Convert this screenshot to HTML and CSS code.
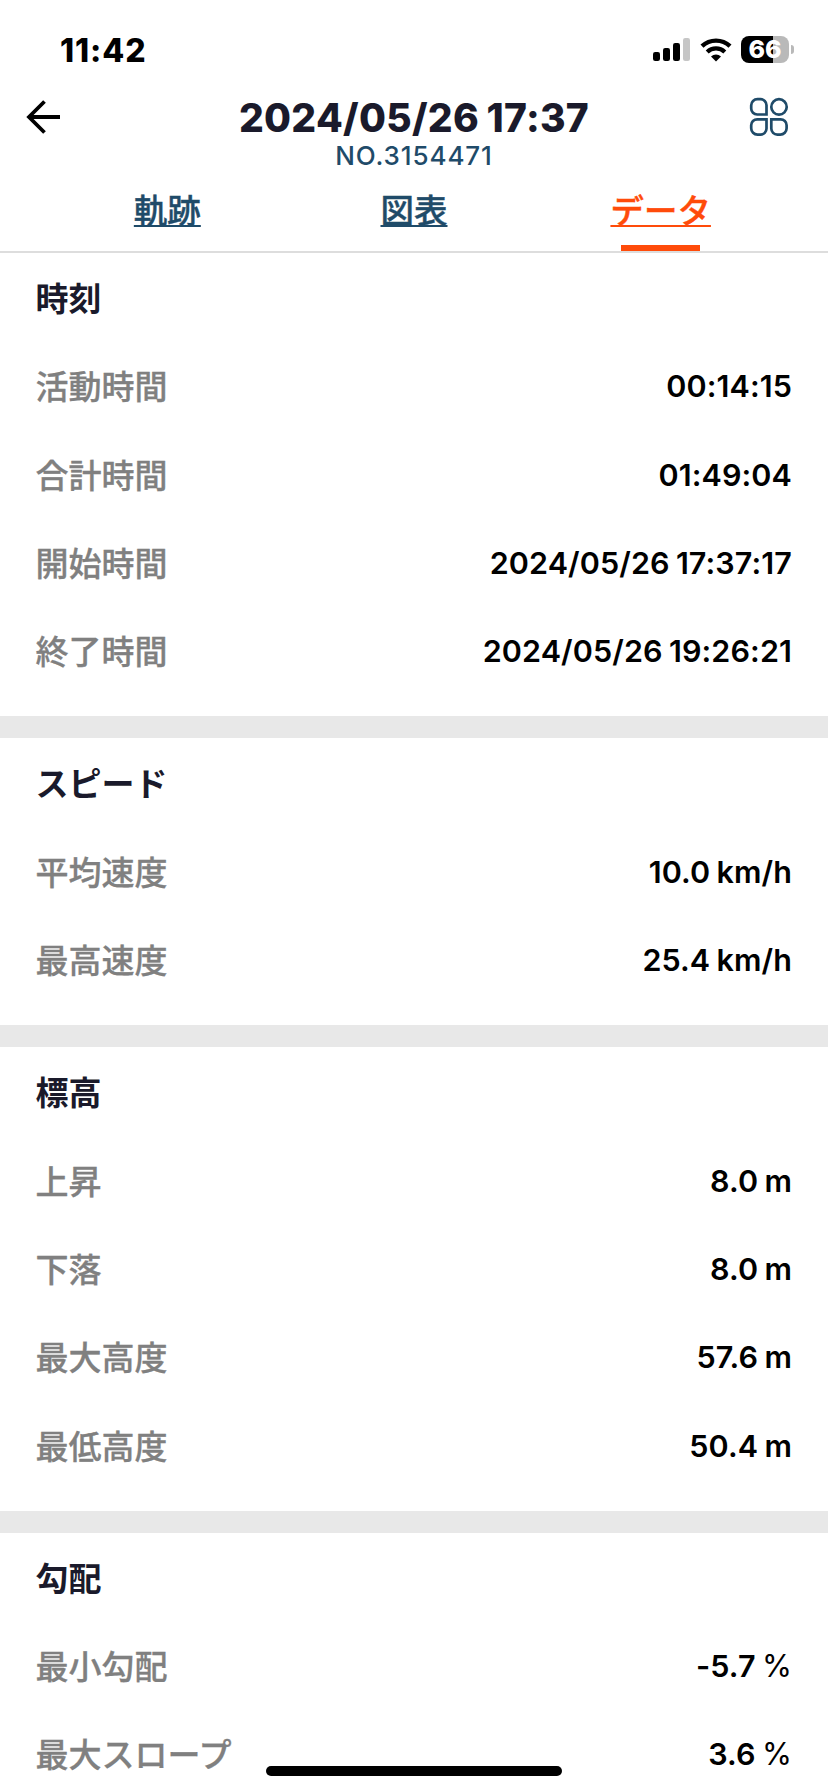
FILE: index.html
```html
<!DOCTYPE html>
<html lang="ja">
<head>
  <meta charset="UTF-8">
  <meta name="viewport" content="width=device-width, initial-scale=1.0">
  <title>データ</title>
  <link rel="stylesheet" href="styles.css">
</head>
<body>
  <div class="status-bar">
    <span class="clock">11:42</span>
    <div class="status-icons">
      <svg class="signal" width="38" height="24" viewBox="0 0 38 24">
        <rect x="0" y="14" width="7" height="9" rx="2.2"/>
        <rect x="10" y="10" width="7" height="13" rx="2.2"/>
        <rect x="20" y="5" width="7" height="18" rx="2.2"/>
        <rect x="30" y="0" width="7" height="23" rx="2.2" fill="#c6c6c6"/>
      </svg>
      <svg class="wifi" width="32" height="24" viewBox="0 0 32 24">
        <path d="M2 8.2a20.4 20.4 0 0 1 28 0" fill="none" stroke="#000" stroke-width="4.4"/>
        <path d="M7.2 14a12.7 12.7 0 0 1 17.6 0" fill="none" stroke="#000" stroke-width="4.2"/>
        <path d="M11 18.6a7.3 7.3 0 0 1 10 0L16 23.6z"/>
      </svg>
      <div class="battery"><span>66</span></div>
      <div class="battery-tip"></div>
    </div>
  </div>

  <header class="header">
    <svg class="back" width="36" height="36" viewBox="0 0 36 36" fill="none" stroke="#000" stroke-width="3.8">
      <path d="M34 18H3.500M18.500 2.500L3 18l15.500 15.500"/>
    </svg>
    <div class="heading">
      <h1>2024/05/26 17:37</h1>
      <p>NO.3154471</p>
    </div>
    <svg class="menu" width="40" height="40" viewBox="0 0 40 40" fill="none" stroke="#1f4b69" stroke-width="2.700">
      <path d="M8.500 2.200h3a6 6 0 0 1 6 6v9.300h-9.300a6 6 0 0 1-6-6v-3a6.300 6.300 0 0 1 6.300-6.300z"/>
      <circle cx="30" cy="9.900" r="7.700"/>
      <path d="M8.200 22.300h9.300v9.300a6 6 0 0 1-6 6h-3a6.300 6.300 0 0 1-6.300-6.300v-3a6 6 0 0 1 6-6z"/>
      <path d="M22.300 22.300h9.300a6 6 0 0 1 6 6v3a6.300 6.300 0 0 1-6.300 6.300h-3a6 6 0 0 1-6-6z"/>
    </svg>
  </header>

  <nav class="tabs">
    <a class="tab">軌跡</a>
    <a class="tab">図表</a>
    <a class="tab active">データ</a>
  </nav>

  <main>
    <section class="group">
      <h2>時刻</h2>
      <div class="row"><span class="label">活動時間</span><span class="value">00:14:15</span></div>
      <div class="row"><span class="label">合計時間</span><span class="value">01:49:04</span></div>
      <div class="row"><span class="label">開始時間</span><span class="value">2024/05/26 17:37:17</span></div>
      <div class="row"><span class="label">終了時間</span><span class="value">2024/05/26 19:26:21</span></div>
    </section>

    <section class="group">
      <h2>スピード</h2>
      <div class="row"><span class="label">平均速度</span><span class="value">10.0 km/h</span></div>
      <div class="row"><span class="label">最高速度</span><span class="value">25.4 km/h</span></div>
    </section>

    <section class="group">
      <h2>標高</h2>
      <div class="row"><span class="label">上昇</span><span class="value">8.0 m</span></div>
      <div class="row"><span class="label">下落</span><span class="value">8.0 m</span></div>
      <div class="row"><span class="label">最大高度</span><span class="value">57.6 m</span></div>
      <div class="row"><span class="label">最低高度</span><span class="value">50.4 m</span></div>
    </section>

    <section class="group">
      <h2>勾配</h2>
      <div class="row"><span class="label">最小勾配</span><span class="value">-5.7 <span class="percent">%</span></span></div>
      <div class="row"><span class="label">最大スロープ</span><span class="value">3.6 <span class="percent">%</span></span></div>
    </section>
  </main>

  <div class="home-indicator"></div>
</body>
</html>
```

FILE: styles.css
```css
* {
  box-sizing: border-box;
}

body {
  margin: 0;
  height: 1792px;
  overflow: hidden;
  background-color: #fff;
  color: #000;
  font-family: Inter, "Noto Sans CJK JP", sans-serif;
}

h1, h2, p {
  margin: 0;
}

/* Status bar */
.status-bar {
  display: flex;
  justify-content: space-between;
  align-items: center;
  height: 88px;
  padding: 11px 34px 0 60px;
}

.clock {
  padding-top: 1px;
  font-size: 32px;
  font-weight: 800;
  letter-spacing: 0.9px;
}

.status-icons {
  display: flex;
  align-items: center;
}

.wifi {
  margin-left: 9px;
}

.battery {
  width: 48px;
  height: 27px;
  margin-left: 9px;
  border-radius: 8px;
  background: linear-gradient(to right, #000 66%, #b9b9b9 66%);
  color: #fff;
  font-size: 25px;
  font-weight: 800;
  line-height: 27px;
  text-align: center;
}

.battery-tip {
  width: 3px;
  height: 9px;
  margin-left: 2px;
  border-radius: 0 4px 4px 0;
  background-color: #b9b9b9;
}

/* Header */
.header {
  display: grid;
  grid-template-columns: 1fr auto 1fr;
  align-items: start;
  height: 90px;
  padding: 9px 26px 0;
}

.back {
  margin-top: 2px;
}

.menu {
  justify-self: end;
  margin-right: 13px;
}

.heading {
  text-align: center;
}

.heading h1 {
  color: #1a1a2b;
  font-size: 39px;
  font-weight: 800;
  line-height: 42px;
  letter-spacing: 0.3px;
  word-spacing: -1.5px;
}

.heading p {
  color: #1f4b69;
  font-size: 26px;
  font-weight: 500;
  line-height: 34px;
  letter-spacing: 0.9px;
}

/* Tabs */
.tabs {
  display: flex;
  height: 75px;
  padding: 0 44px;
  border-bottom: 2px solid #ddd;
}

.tab {
  position: relative;
  flex: 1;
  color: #1f4b69;
  font-size: 33.5px;
  font-weight: 500;
  line-height: 66px;
  text-align: center;
  text-decoration: underline;
  text-decoration-thickness: 2px;
  text-decoration-skip-ink: none;
  text-underline-offset: 2px;
  -webkit-text-stroke: 0.4px;
}

.tab.active {
  color: #ff4b0a;
}

.tab.active::after {
  content: "";
  position: absolute;
  left: 50%;
  bottom: 0;
  width: 79px;
  height: 6px;
  margin-left: -40px;
  background-color: #ff4b0a;
}

/* Data groups */
.group {
  padding: 0 36px 22px 35.5px;
  border-bottom: 22px solid #e8e8e8;
}

.group h2 {
  height: 88.3px;
  color: #1a1a2b;
  font-size: 33px;
  font-weight: 700;
  line-height: 92px;
}

.row {
  display: flex;
  justify-content: space-between;
  height: 88.3px;
}

.label {
  color: #808080;
  font-size: 33px;
  font-weight: 500;
  line-height: 92px;
  -webkit-text-stroke: 0.3px;
}

.value {
  font-size: 30.5px;
  font-weight: 600;
  line-height: 90px;
  letter-spacing: 0.1px;
  word-spacing: -1.5px;
}

.percent {
  font-weight: 400;
}

.home-indicator {
  position: fixed;
  left: 266px;
  bottom: 16px;
  width: 296px;
  height: 10px;
  border-radius: 5px;
  background-color: #000;
}
```
